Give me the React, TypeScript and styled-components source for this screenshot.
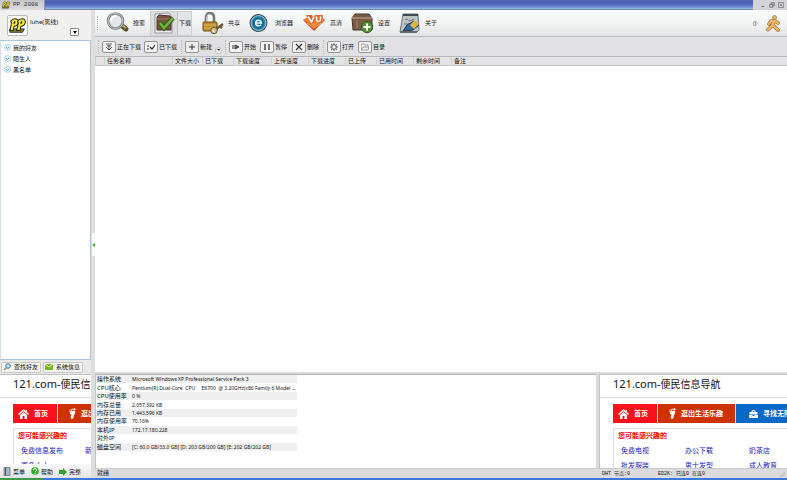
import React from "react";
import styled, { createGlobalStyle, css } from "styled-components";

const Global = createGlobalStyle`
  *, *::before, *::after { box-sizing: border-box; }
  html, body, #root { height: 100%; }
  body { margin: 0; overflow: hidden; }
  body, button { font: 6px/8px "Noto Sans", "Noto Sans CJK SC", sans-serif; color: #111; }
  button { border: 0; padding: 0; background: none; text-align: left; white-space: nowrap; }
  svg { display: block; flex: none; }
  a { text-decoration: none; }
`;

const Window = styled.div`
  height: 100vh;
  display: flex;
  flex-direction: column;
  background: #e0e0e2;
`;
const TitleBar = styled.header`
  height: 10px;
  flex: none;
  display: flex;
  justify-content: space-between;
  background: linear-gradient(#5468b6 0, #4a5fb4 25%, #5470c0 50%, #7ba2da 80%, #a3c6ea 90%, #6f8ba6 90%);
`;
const TitleTab = styled.h1`
  margin: 0;
  width: 45px;
  display: flex;
  align-items: center;
  gap: 3px;
  padding-left: 2px;
  background: linear-gradient(#c4c5c8, #dcdcdf);
  border-right: 1px solid #8d93a6;
  font: 6px/8px "Liberation Mono", monospace;
  color: #333;
  white-space: nowrap;
`;
const WindowControls = styled.div`
  width: 34px;
  display: flex;
  align-items: center;
  justify-content: flex-end;
  gap: 3px;
  padding-right: 3px;
  background: #d3d3d8;
`;
const Body = styled.div`
  flex: 1;
  min-height: 0;
  display: flex;
`;
const Side = styled.aside`
  width: 91px;
  flex: none;
  display: flex;
  flex-direction: column;
  background: #e9e9e9;
`;
const UserCard = styled.div`
  height: 30px;
  flex: none;
  display: flex;
  align-items: flex-start;
  padding: 5px 12px 0 7px;
  gap: 2px;
  background: #f0f0ee;
`;
const Avatar = styled.div`
  width: 21px;
  height: 21px;
  flex: none;
  display: grid;
  place-items: center;
  background: #fff;
  border: 1px solid #bbb;
  border-radius: 2px;
`;
const UserName = styled.div`
  flex: 1;
  padding-top: 3px;
  white-space: nowrap;
`;
const MenuButton = styled.button`
  width: 9px;
  height: 8px;
  align-self: flex-end;
  margin-bottom: 4px;
  display: grid;
  place-items: center;
  background: #fff;
  border: 1px solid #888;
  border-radius: 1px;
`;
const GroupList = styled.ul`
  flex: 1;
  min-height: 0;
  margin: 0;
  padding: 1px 3px;
  list-style: none;
  background: #fff;
  border: 1px solid #a9c3da;
  border-left-color: #d4dde5;
`;
const Group = styled.button`
  height: 11px;
  display: flex;
  align-items: center;
  gap: 2px;
`;
const SideTabs = styled.div`
  height: 14px;
  flex: none;
  display: flex;
  align-items: center;
  gap: 2px;
  padding-left: 1px;
`;
const SideTab = styled.button`
  width: 40px;
  height: 11px;
  display: flex;
  align-items: center;
  gap: 3px;
  padding-left: 1px;
  background: #f3f3ef;
  border: 1px solid #c8c8c4;
  border-radius: 1px;
`;
const SideFooter = styled.nav`
  height: 14px;
  flex: none;
  display: flex;
  align-items: center;
  gap: 6px;
  padding: 1px 0 0 3px;
  background: linear-gradient(#fafafa, #e4e4e4);
`;
const FooterButton = styled.button`
  display: flex;
  align-items: center;
  gap: 2px;
`;
const Splitter = styled.div`
  width: 4px;
  flex: none;
  display: flex;
  flex-direction: column;
  align-items: center;
  padding-top: 223px;
  background: #dededf;
`;
const SplitHandle = styled.button`
  width: 3px;
  height: 23px;
  display: grid;
  place-items: center;
  background: #fafafa;
`;
const Main = styled.main`
  flex: 1;
  min-width: 0;
  display: flex;
  flex-direction: column;
`;
const Toolbar = styled.nav`
  height: 27px;
  flex: none;
  display: flex;
  align-items: center;
  padding: 0 7px 0 2px;
  background: linear-gradient(#fbfcfc, #f0f1f1 60%, #e1e2e3);
  border-bottom: 1px solid #bcbdbf;
`;
const Grip = styled.span<{ $gap: number }>`
  width: 2px;
  height: 14px;
  flex: none;
  margin-right: ${(p) => p.$gap}px;
  border-left: 1px dotted #b8b8b8;
`;
const Tool = styled.button<{ $w: number; $icon: number; $active?: boolean }>`
  width: ${(p) => p.$w}px;
  height: 25px;
  flex: none;
  display: grid;
  grid-template-columns: ${(p) => p.$icon}px auto;
  align-items: center;
  ${(p) =>
    p.$active &&
    css`
      margin-right: 10px;
      background: linear-gradient(90deg, #dcdddf 0 26px, #bfc0c2 26px 27px, #e4e5e6 27px);
      border: 1px solid #cecfd1;
      padding-left: 3px;
    `}
`;
const Extras = styled.div`
  margin-left: auto;
  display: flex;
  align-items: center;
  gap: 8px;
`;
const Actions = styled.div`
  height: 20px;
  flex: none;
  display: flex;
  align-items: center;
  padding-left: 3px;
  background: #e1e1e3;
  border-bottom: 1px solid #bababc;
`;
const Action = styled.button<{ $w: number }>`
  width: ${(p) => p.$w}px;
  flex: none;
  display: flex;
  align-items: center;
  gap: 1px;
`;
const Key = styled.span`
  width: 14px;
  height: 12px;
  flex: none;
  display: grid;
  place-items: center;
  background: #f2f2f2;
  border: 1px solid #949494;
  border-radius: 2px;
`;
const More = styled.span`
  width: 7px;
  height: 7px;
  margin-top: 7px;
  margin-left: 2px;
  display: grid;
  place-items: center;
  background: #fff;
  border: 1px solid #b5b5b5;
  border-radius: 50%;
`;
const Tasks = styled.section`
  flex: 1;
  min-height: 0;
  background: #fff;
`;
const TaskTable = styled.table`
  width: 100%;
  table-layout: fixed;
  border-collapse: collapse;
  background: #e3e3e5;
  border-bottom: 1px solid #c6c6c8;
`;
const Column = styled.th<{ $w?: number }>`
  width: ${(p) => (p.$w ? `${p.$w}px` : "auto")};
  height: 8px;
  padding: 0 0 0 2px;
  border-left: 1px solid #d0d0d2;
  font-weight: 400;
  line-height: 8px;
  text-align: left;
  white-space: nowrap;
`;
const Lower = styled.div`
  height: 96px;
  flex: none;
  display: flex;
  border-top: 2px solid #d9d9db;
`;
const Info = styled.section`
  flex: 1;
  min-width: 0;
  background: #fff;
  border-top: 1px solid #b5b5b7;
  border-left: 1px solid #c5c5c7;
`;
const InfoTable = styled.table`
  width: 201px;
  height: 76px;
  border-collapse: collapse;
  table-layout: fixed;
  line-height: 8px;
  tr:nth-child(odd) { background: #efefef; }
  th { width: 36px; padding: 0 0 0 1px; font-weight: 400; text-align: left; }
  td { padding: 0; font-family: "Noto Sans", sans-serif; font-size: 5px; white-space: pre; }
`;
const LowerSplit = styled.div`
  width: 4px;
  flex: none;
  background: #dadadc;
  border-right: 1px solid #c2c2c4;
`;
const WebPane = styled.section<{ $side?: boolean }>`
  ${(p) => (p.$side ? "height: 90px;" : "width: 187px;")}
  flex: none;
  overflow: hidden;
  background: #fff;
  border-top: 1px solid #c0c0c2;
`;
const WebTitle = styled.h2`
  height: 23px;
  margin: 0;
  padding: 2px 0 0 13px;
  border-bottom: 1px solid #ddd;
  font-size: 10px;
  font-weight: 400;
  line-height: 14px;
  white-space: nowrap;
`;
const Latin = styled.span`
  font-size: 11px;
`;
const WebNav = styled.nav`
  display: flex;
  margin: 6px 0 5px 13px;
  overflow: hidden;
`;
const NavLink = styled.a<{ $w: number; $bg: string; $pad: number }>`
  width: ${(p) => p.$w}px;
  height: 19px;
  flex: none;
  display: flex;
  align-items: center;
  gap: 5px;
  padding-left: ${(p) => p.$pad}px;
  background: ${(p) => p.$bg};
  border-right: 1px solid #f4d8d0;
  color: #fff;
  font-size: 7px;
  font-weight: 700;
  white-space: nowrap;
`;
const Interests = styled.div`
  margin-left: 13px;
  padding: 2px 0 0 7px;
  border: 1px solid #ddd;
  border-right: 0;
  overflow: hidden;
`;
const InterestTitle = styled.h3`
  margin: 0 0 0 -3px;
  color: #f00;
  font-size: 7px;
  line-height: 10px;
  white-space: nowrap;
`;
const Links = styled.div`
  display: grid;
  grid-template-columns: repeat(3, 64px);
  padding-top: 2px;
  a { color: #2222c4; font-size: 7px; line-height: 15px; white-space: nowrap; }
`;
const Status = styled.footer`
  height: 10px;
  flex: none;
  display: flex;
  align-items: center;
  padding: 0 2px;
  background: #dcdcde;
  border-top: 1px solid #cacacc;
`;
const StatusText = styled.span<{ $w?: number }>`
  flex: ${(p) => (p.$w ? `0 0 ${p.$w}px` : "1")};
  font-family: "Liberation Mono", "Noto Sans CJK SC", monospace;
  font-size: ${(p) => (p.$w ? 5 : 6)}px;
  white-space: nowrap;
`;
const TaskStrip = styled.div`
  height: 2px;
  flex: none;
  background: linear-gradient(90deg, #3d9b49 43px, #3878df 43px);
`;

const Mascot = ({ size }: { size: number }) => (
  <svg width={size} height={size} viewBox="0 0 20 20">
    <path d="M1 14v4h15l2-4z" fill="#8a8420" stroke="#222" />
    <g fill="#f4e72c" stroke="#222" strokeWidth="1.2" strokeLinejoin="round">
      <path d="M2 5q2-3 5-3 5 0 4 5-1 4-5 4l-1 5H1l2-9z" />
      <path d="M10 5q2-3 5-3 5 0 4 5-1 4-5 4l-1 5H9l2-9z" />
    </g>
    <path d="M7 5 6 8M15 5 14 8" stroke="#222" strokeWidth="1.500" />
  </svg>
);
const SearchIcon = () => (
  <svg width="24" height="22" viewBox="0 0 24 22">
    <path d="m15 13 5 4" stroke="#5d542e" strokeWidth="5" strokeLinecap="round" />
    <path d="m16 13 4 3" stroke="#b9ad61" strokeWidth="2" />
    <circle cx="9.500" cy="9" r="7.500" fill="#e2e9eb" stroke="#737778" strokeWidth="2.600" />
    <circle cx="9.500" cy="9" r="7.500" fill="none" stroke="#c8cccd" strokeWidth="1" />
    <path d="M5 9a5 5 0 0 1 5-5" stroke="#fff" strokeWidth="2" fill="none" />
  </svg>
);
const DownloadIcon = () => (
  <svg width="22" height="22" viewBox="0 0 22 22">
    <path d="M1 2 15 1l3 4v16H1z" fill="#ededeb" stroke="#999" />
    <path d="m3 5 2-2 11 1 1 2v12H3z" fill="#765442" stroke="#493329" />
    <path d="M3 7h14" stroke="#9a7966" />
    <path d="m6 11 4 5 9-10" fill="none" stroke="#2c5d19" strokeWidth="4.500" />
    <path d="m6 11 4 5 9-10" fill="none" stroke="#75b33f" strokeWidth="2.600" />
  </svg>
);
const LockIcon = () => (
  <svg width="23" height="23" viewBox="0 0 23 23">
    <path d="M4 11V6q0-5 4-5t4 5v5" fill="none" stroke="#777" strokeWidth="2.600" />
    <path d="M4.500 11V6q0-4 3.500-4" fill="none" stroke="#ccc" />
    <rect x="1" y="10" width="14" height="9" rx="1" fill="#bd8c31" stroke="#72501a" />
    <path d="M2 13h12M2 16h12" stroke="#e0b65a" />
    <path d="m14 17 7-5M18 14l2 2" stroke="#6a5a3b" strokeWidth="2.600" />
    <circle cx="12" cy="18.500" r="3.200" fill="#ceb98a" stroke="#765d32" />
    <circle cx="11.500" cy="19" r="1" fill="#fff" />
  </svg>
);
const BrowserIcon = () => (
  <svg width="19" height="20" viewBox="0 0 20 20">
    <circle cx="10" cy="10" r="9.400" fill="#34495a" />
    <circle cx="10" cy="10" r="7.800" fill="#2a86b4" stroke="#a9d4e4" strokeWidth="1" />
    <circle cx="10" cy="10" r="6" fill="#1c6592" />
    <path d="M7 10h6q0-3-3-3t-3 3 3 3q1.800 0 2.700-1.300" fill="none" stroke="#e5faff" strokeWidth="1.600" />
  </svg>
);
const VuIcon = () => (
  <svg width="22" height="18" viewBox="0 0 22 18">
    <path d="M0 6 5 3l12-1 5 4-11 11z" fill="#dc4e20" />
    <path d="m1 6 4-3h12l4 3-10 7z" fill="#f38b31" />
    <path d="M3 1h6l1 4 2-4h8l-1 6q-1 3-5 2l-2-2-3 3H7z" fill="#e8622a" />
    <path d="M5 2.500 8.500 8l2.500-5.500M13.500 2.500v3q.3 2 2 2t2-2v-3" fill="none" stroke="#fff" strokeWidth="1.600" />
    <path d="m4 9 7 5 7-5" fill="none" stroke="#f6ae6a" />
  </svg>
);
const SettingsIcon = () => (
  <svg width="23" height="21" viewBox="0 0 23 21">
    <path d="m1 5 3-4h14l3 4v12H2z" fill="#7a5b46" stroke="#443226" />
    <path d="M1 5h20" stroke="#a38069" strokeWidth="2" />
    <path d="M6 7v8" stroke="#92705a" strokeWidth="2" />
    <circle cx="16" cy="14" r="5.700" fill="#568d38" stroke="#355b25" />
    <path d="M16 10.500v7M12.500 14h7" stroke="#fff" strokeWidth="2" />
  </svg>
);
const AboutIcon = () => (
  <svg width="22" height="21" viewBox="0 0 22 21">
    <path d="M4 1h15l1 16-2 2H1z" fill="#bcc4ca" stroke="#69747d" />
    <path d="M4 2h15" stroke="#3f4d58" strokeWidth="2" />
    <path d="M6 7q2-2 3 0t6-1M5 11h5" fill="none" stroke="#66727c" />
    <path d="m4 18 4-6 7-4 5 4-6 5z" fill="#2d6b9c" stroke="#203746" />
    <path d="m11 12 5-5 4 4-5 5z" fill="#e0b342" />
    <path d="M1 19h17" stroke="#505a60" strokeWidth="1.500" />
  </svg>
);
const Runner = () => (
  <svg width="14" height="17" viewBox="0 0 14 17">
    <g fill="none" strokeLinecap="round" strokeLinejoin="round">
      <path d="M8 6 6 11 2 14.500M7 10l5 5M3 9l2-3h4l3 2" stroke="#96734f" strokeWidth="3.600" />
      <path d="M8 6 6 11 2 14.500M7 10l5 5M3 9l2-3h4l3 2" stroke="#f5b85e" strokeWidth="2.200" />
    </g>
    <circle cx="8.500" cy="2.500" r="2" fill="#f5b85e" stroke="#96734f" strokeWidth=".8" />
  </svg>
);

const Line = ({ d, size = 8, width = 1, color = "#333" }: { d: string; size?: number; width?: number; color?: string }) => (
  <svg width={size} height={size} viewBox="0 0 8 8" fill="none" stroke={color} strokeWidth={width}>
    <path d={d} />
  </svg>
);
const Chevron = () => (
  <svg width="7" height="7" viewBox="0 0 7 7">
    <circle cx="3.500" cy="3.500" r="3" fill="#e6f4fc" stroke="#a0cbe5" strokeWidth=".8" />
    <path d="m2 3 1.500 1.500L5 3" fill="none" stroke="#5a9bc8" />
  </svg>
);
const House = () => (
  <svg width="11" height="10" viewBox="0 0 11 10" fill="#fff">
    <path d="M5.500 0 0 5l1 1 4.500-4L10 6l1-1-2-2V1H7.500v1z" />
    <path d="m2 6 3.500-3L9 6v4H6.500V7h-2v3H2z" />
  </svg>
);
const Foot = () => (
  <svg width="7" height="11" viewBox="0 0 7 11" fill="#fff">
    <path d="M1 4q2-2 5-1 1 2-1 4l-.5 3q-2 2-3-.5L2.500 7Q0 6 1 4z" />
    <circle cx="1" cy="3" r=".8" /><circle cx="2.300" cy="1.800" r=".8" /><circle cx="4" cy="1.200" r=".8" /><circle cx="5.700" cy="1.200" r="1" />
  </svg>
);
const Case = () => (
  <svg width="9" height="8" viewBox="0 0 9 8">
    <path d="M3 2V.700h3V2" fill="none" stroke="#fff" />
    <path d="M.500 2h8v2.500h-8zM0 5h3.500v1h2V5H9v3H0z" fill="#fff" />
  </svg>
);

const columns: [string, number?][] = [
  ["任务名称", 68], ["文件大小", 30], ["已下载", 31], ["下载速度", 38], ["上传速度", 37],
  ["下载进度", 37], ["已上传", 31], ["已用时间", 37], ["剩余时间", 38], ["备注"],
];
const system = [
  ["操作系统", "Microsoft Windows XP Professional Service Pack 3"],
  ["CPU核心", "Pentium(R) Dual-Core  CPU     E6700  @ 3.20GHz(x86 Family 6 Model ..."],
  ["CPU使用率", "0 %"],
  ["内存总量", "2,057,392 KB"],
  ["内存已用", "1,443,596 KB"],
  ["内存使用率", "70.16%"],
  ["本机IP", "172.17.180.228"],
  ["对外IP", ""],
  ["磁盘空间", "[C: 60.0 GB/33.0 GB] [D: 203 GB/200 GB] [E: 202 GB/202 GB]"],
];

const WebPage = ({ side, links }: { side?: boolean; links: string[] }) => (
  <WebPane $side={side}>
    <WebTitle><Latin>121.com-</Latin>便民信息导航</WebTitle>
    <WebNav>
      <NavLink href="#home" $w={45} $bg="#fb101b" $pad={5}><House />首页</NavLink>
      <NavLink href="#life" $w={78} $bg="#d03100" $pad={11}><Foot />逛出生活乐趣</NavLink>
      <NavLink href="#find" $w={77} $bg="#0868c8" $pad={13}><Case />寻找无限商机</NavLink>
    </WebNav>
    <Interests>
      <InterestTitle>您可能感兴趣的</InterestTitle>
      <Links>{links.map((l) => <a href="#link" key={l}>{l}</a>)}</Links>
    </Interests>
  </WebPane>
);

export default function App() {
  return (
    <>
      <Global />
      <Window>
        <TitleBar>
          <TitleTab><Mascot size={8} />PP 2008</TitleTab>
          <WindowControls>
            <button aria-label="最小化"><Line size={6} d="M2 6h4" color="#555" /></button>
            <button aria-label="还原"><Line size={6} d="M3 3V1h4v4H5M1 3h4v4H1z" color="#555" /></button>
            <button aria-label="关闭"><Line size={6} d="M.5.5h7v7h-7zM2 2l4 4M6 2 2 6" color="#777" /></button>
          </WindowControls>
        </TitleBar>
        <Body>
          <Side>
            <UserCard>
              <Avatar><Mascot size={17} /></Avatar>
              <UserName>luhe(离线)</UserName>
              <MenuButton aria-label="状态"><svg width="4" height="3"><path d="M0 0h4L2 3z" /></svg></MenuButton>
            </UserCard>
            <GroupList>
              {["我的好友", "陌生人", "黑名单"].map((g) => (
                <li key={g}><Group><Chevron />{g}</Group></li>
              ))}
            </GroupList>
            <SideTabs>
              <SideTab>
                <svg width="8" height="8" viewBox="0 0 8 8"><path d="m1 7 3-3" stroke="#a88b54" strokeWidth="1.500" /><circle cx="5" cy="3" r="2.300" fill="#bfe0fa" stroke="#4576b6" /></svg>
                查找好友
              </SideTab>
              <SideTab>
                <svg width="8" height="6" viewBox="0 0 8 6"><path d="M0 0h8v6H0z" fill="#78b51e" /><path d="m0 0 4 3 4-3" fill="none" stroke="#e4f5b9" /></svg>
                系统信息
              </SideTab>
            </SideTabs>
            <WebPage side links={["免费信息发布", "新闻资讯", "免费杂志", "更多人士"]} />
            <SideFooter>
              <FooterButton>
                <svg width="8" height="9" viewBox="0 0 8 9"><path d="M1 .5h6v8H1z" fill="#a6b7c1" stroke="#75868f" /><path d="M2.500 1v7" stroke="#405461" /></svg>
                菜单
              </FooterButton>
              <FooterButton>
                <svg width="8" height="9" viewBox="0 0 8 9"><circle cx="4" cy="4" r="3.800" fill="#2cac27" /><path d="M2.500 3q0-1.500 1.500-1.500T5.500 3 4 5M4 6v1" fill="none" stroke="#fff" /></svg>
                帮助
              </FooterButton>
              <FooterButton>
                <svg width="8" height="8" viewBox="0 0 8 8"><path d="M0 2h4V0l4 4-4 4V6H0z" fill="#30a32d" /></svg>
                完整
              </FooterButton>
            </SideFooter>
          </Side>
          <Splitter><SplitHandle aria-label="折叠"><svg width="3" height="4"><path d="m3 0-3 2 3 2z" fill="#38aa38" /></svg></SplitHandle></Splitter>
          <Main>
            <Toolbar>
              <Grip $gap={7} />
              <Tool $w={44} $icon={27}><SearchIcon />搜索</Tool>
              <Tool $w={42} $icon={25} $active><DownloadIcon />下载</Tool>
              <Tool $w={47} $icon={26}><LockIcon />共享</Tool>
              <Tool $w={54} $icon={26}><BrowserIcon />浏览器</Tool>
              <Tool $w={48} $icon={27}><VuIcon />高清</Tool>
              <Tool $w={48} $icon={27}><SettingsIcon />设置</Tool>
              <Tool $w={42} $icon={26}><AboutIcon />关于</Tool>
              <Extras>
                <button aria-label="展开"><Line size={5} d="M1 1h4l2 3-2 3H1zM4 1v6" color="#888" /></button>
                <Runner />
              </Extras>
            </Toolbar>
            <Actions>
              <Grip $gap={2} />
              <Action $w={42}><Key><Line d="M1 1h6M2 3h4M1 4l3 3 3-3M4 2v5" width={0.8} /></Key>正在下载</Action>
              <Action $w={37}><Key><Line d="M0 3h2M0 6h2M3 4l2 2 3-4" width={1.2} /></Key>已下载</Action>
              <Grip $gap={2} />
              <Action $w={40}><Key><Line d="M4 1v6M1 4h6" /></Key>新建<More><svg width="3" height="2"><path d="M0 0h3L2 2z" /></svg></More></Action>
              <Grip $gap={2} />
              <Action $w={31}><Key><Line d="M1 2v4M3 2l4 2-4 2zM4 3v2M5 3v2" /></Key>开始</Action>
              <Action $w={32}><Key><Line d="M2 1v6M6 1v6" width={1.3} /></Key>暂停</Action>
              <Action $w={31}><Key><Line d="m1 1 6 6M7 1 1 7" width={1.2} /></Key>删除</Action>
              <Grip $gap={2} />
              <Action $w={31}><Key><Line d="M4 0v2M4 6v2M0 4h2M6 4h2M1 1l1 1M6 6l1 1M7 1 6 2M2 6 1 7M2 2h4v4H2z" width={0.7} /></Key>打开</Action>
              <Action $w={30}><Key><Line d="M0 7V1h3l1 1h3v2M0 7l2-3h6L7 7z" width={0.7} color="#777" /></Key>目录</Action>
            </Actions>
            <Tasks>
              <TaskTable>
                <thead>
                  <tr>
                    <Column as="td" $w={9} />
                    {columns.map(([name, w]) => <Column key={name} $w={w} scope="col">{name}</Column>)}
                  </tr>
                </thead>
              </TaskTable>
            </Tasks>
            <Lower>
              <Info>
                <InfoTable>
                  <tbody>{system.map(([k, v]) => <tr key={k}><th scope="row">{k}</th><td>{v}</td></tr>)}</tbody>
                </InfoTable>
              </Info>
              <LowerSplit />
              <WebPage links={["免费电视", "办公下载", "奶茶店", "批发服装", "男士发型", "成人教育"]} />
            </Lower>
            <Status>
              <StatusText>就绪</StatusText>
              <StatusText $w={56}>DHT 节点:0</StatusText>
              <StatusText $w={121}>ED2K: 已连0 在连0</StatusText>
              <Line size={6} d="M1 8 8 1M4 8l4-4" color="#aaa" />
            </Status>
          </Main>
        </Body>
        <TaskStrip />
      </Window>
    </>
  );
}
